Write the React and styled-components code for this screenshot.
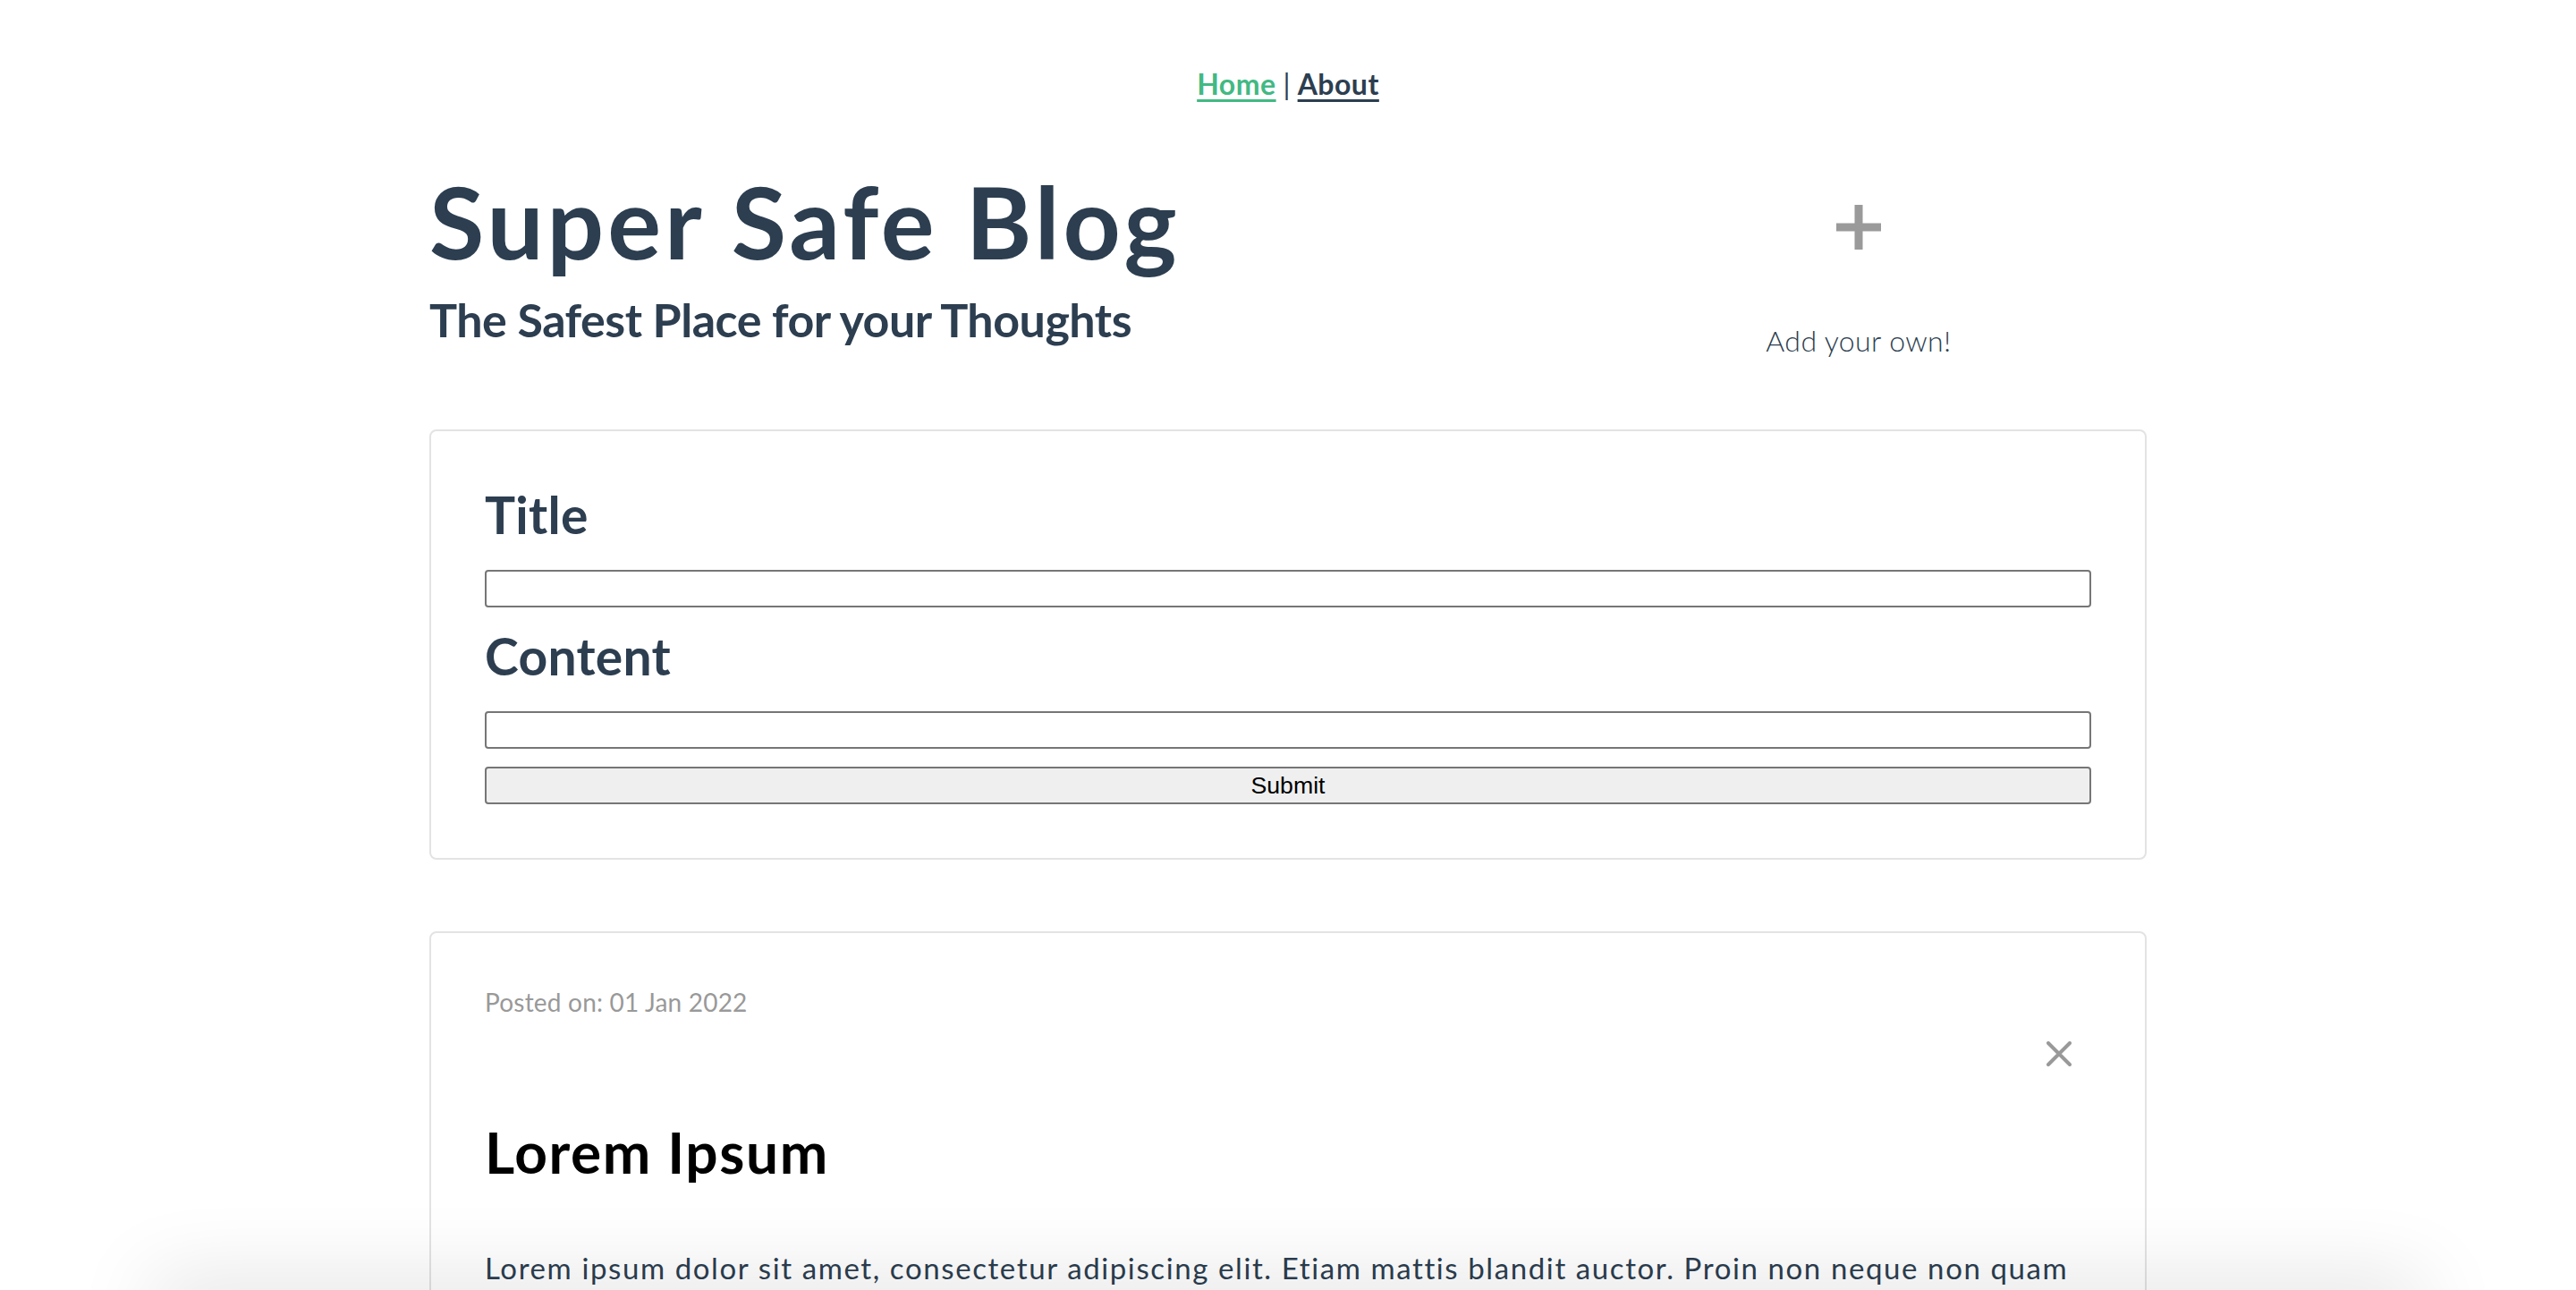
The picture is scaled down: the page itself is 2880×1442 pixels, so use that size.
import React from 'react';
import styled, { createGlobalStyle } from 'styled-components';

const GlobalStyle = createGlobalStyle`
  html, body {
    margin: 0;
    padding: 0;
    background: #fff;
  }
  body {
    font-family: Lato, "Noto Sans", Arial, sans-serif;
    color: #2c3e50;
    -webkit-font-smoothing: antialiased;
  }
`;

const Page = styled.div`
  display: flex;
  flex-direction: column;
  align-items: center;
  min-height: 100vh;
`;

const Nav = styled.nav`
  padding: 75px 0 0;
  font-size: 32px;
  line-height: 38px;
  font-weight: 700;
  color: #2c3e50;
`;

const NavLink = styled.a`
  color: ${p => (p.$active ? '#42b983' : '#2c3e50')};
  text-decoration: underline;
  text-underline-offset: 5px;
  text-decoration-thickness: 3px;
  letter-spacing: 0.5px;
  cursor: pointer;
`;

const Separator = styled.span`
  font-weight: 400;
  margin: 0 8px;
`;

const Main = styled.main`
  width: 1920px;
  display: flex;
  flex-direction: column;
`;

const Header = styled.header`
  display: flex;
  justify-content: space-between;
  align-items: flex-start;
  margin-top: 78px;
`;

const Brand = styled.div`
  display: flex;
  flex-direction: column;
`;

const BlogTitle = styled.h1`
  margin: 0;
  font-size: 112px;
  line-height: 112px;
  font-weight: 700;
  letter-spacing: 4px;
`;

const Tagline = styled.h3`
  margin: 23px 0 0;
  font-size: 52px;
  line-height: 62px;
  font-weight: 700;
  letter-spacing: -0.5px;
`;

const AddBox = styled.div`
  width: 320px;
  margin: 38px 162px 0 0;
  display: flex;
  flex-direction: column;
  align-items: center;
  cursor: pointer;
`;

const AddText = styled.span`
  margin-top: 83px;
  font-size: 32px;
  line-height: 38px;
  font-weight: 300;
  letter-spacing: 0.4px;
`;

const Card = styled.section`
  margin-top: ${p => p.$gap}px;
  border: 2px solid #e3e3e3;
  border-radius: 8px;
  padding: 60px;
  display: flex;
  flex-direction: column;
`;

const Label = styled.label`
  display: block;
  margin-top: ${p => p.$top}px;
  font-size: 57px;
  line-height: 57px;
  font-weight: 700;
  letter-spacing: 0.3px;
`;

const Input = styled.input`
  box-sizing: border-box;
  margin-top: 33px;
  width: 100%;
  height: 42px;
  border: 2px solid #767676;
  border-radius: 4px;
  padding: 2px 4px;
  font-size: 26px;
`;

const SubmitButton = styled.button`
  box-sizing: border-box;
  margin-top: 20px;
  width: 100%;
  height: 42px;
  background: #efefef;
  border: 2px solid #767676;
  border-radius: 4px;
  font-family: "Liberation Sans", Arial, sans-serif;
  font-size: 26.67px;
  color: #000;
  padding: 0;
`;

const PostedOn = styled.div`
  font-size: 28px;
  line-height: 34px;
  font-weight: 400;
  letter-spacing: 0.2px;
  color: #999;
`;

const ActionRow = styled.div`
  display: flex;
  justify-content: flex-end;
  margin-top: 27px;
  padding-right: 22px;
`;

const CloseButton = styled.button`
  border: none;
  background: none;
  padding: 0;
  width: 28px;
  height: 28px;
  display: flex;
  cursor: pointer;
`;

const PostTitle = styled.h1`
  margin: 57px 0 0;
  font-size: 64px;
  line-height: 77px;
  font-weight: 700;
  letter-spacing: 1.6px;
  color: #000;
`;

const PostBody = styled.p`
  margin: 67px 0 0;
  font-size: 33px;
  line-height: 48px;
  font-weight: 400;
  letter-spacing: 1.6px;
  color: #2c3e50;
`;

const BottomShade = styled.div`
  position: fixed;
  left: 180px;
  right: 180px;
  bottom: -40px;
  height: 40px;
  box-shadow: 0 0 90px 10px rgba(0, 0, 0, 0.13);
  pointer-events: none;
`;

const PlusIcon = () => (
  <svg width="50" height="50" viewBox="0 0 50 50">
    <rect x="20.5" y="0" width="9" height="50" fill="#9a9a9a" />
    <rect x="0" y="20.5" width="50" height="9" fill="#9a9a9a" />
  </svg>
);

const CloseIcon = () => (
  <svg width="28" height="28" viewBox="0 0 28 28">
    <path d="M2 2 L26 26 M26 2 L2 26" stroke="#999" strokeWidth="4" strokeLinecap="round" />
  </svg>
);

const posts = [
  {
    date: '01 Jan 2022',
    title: 'Lorem Ipsum',
    body: 'Lorem ipsum dolor sit amet, consectetur adipiscing elit. Etiam mattis blandit auctor. Proin non neque non quam aliquet vulputate. Sed vel tellus at nisi volutpat tincidunt. Morbi eu arcu sed lorem fermentum lacinia.',
  },
];

const App = () => {
  return (
    <Page>
      <GlobalStyle />
      <Nav>
        <NavLink $active>Home</NavLink>
        <Separator>|</Separator>
        <NavLink>About</NavLink>
      </Nav>
      <Main>
        <Header>
          <Brand>
            <BlogTitle>Super Safe Blog</BlogTitle>
            <Tagline>The Safest Place for your Thoughts</Tagline>
          </Brand>
          <AddBox>
            <PlusIcon />
            <AddText>Add your own!</AddText>
          </AddBox>
        </Header>

        <Card $gap={80} as="form" onSubmit={e => e.preventDefault()}>
          <Label $top={5}>Title</Label>
          <Input type="text" />
          <Label $top={26}>Content</Label>
          <Input type="text" />
          <SubmitButton type="submit">Submit</SubmitButton>
        </Card>

        {posts.map((post, i) => (
          <Card $gap={80} key={i}>
            <PostedOn>Posted on: {post.date}</PostedOn>
            <ActionRow>
              <CloseButton aria-label="Delete">
                <CloseIcon />
              </CloseButton>
            </ActionRow>
            <PostTitle>{post.title}</PostTitle>
            <PostBody>{post.body}</PostBody>
          </Card>
        ))}
      </Main>
      <BottomShade />
    </Page>
  );
};

export default App;
